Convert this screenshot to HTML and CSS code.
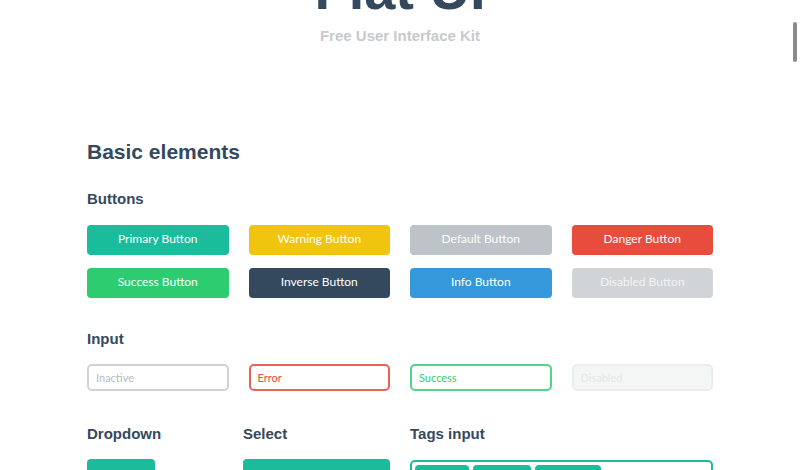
FILE: index.html
```html
<!DOCTYPE html>
<html lang="en">
<head>
<meta charset="utf-8">
<title>Flat UI</title>
<link rel="stylesheet" href="styles.css">
</head>
<body>
<div class="page">
  <header class="hero">
    <h1 class="hero-title">Flat UI</h1>
    <p class="hero-sub">Free User Interface Kit</p>
  </header>

  <main class="content">
    <h2 class="section-title">Basic elements</h2>

    <h3 class="block-title first">Buttons</h3>
    <div class="btn-grid">
      <button class="btn btn-primary">Primary Button</button>
      <button class="btn btn-warning">Warning Button</button>
      <button class="btn btn-default">Default Button</button>
      <button class="btn btn-danger">Danger Button</button>
      <button class="btn btn-success">Success Button</button>
      <button class="btn btn-inverse">Inverse Button</button>
      <button class="btn btn-info">Info Button</button>
      <button class="btn btn-disabled" disabled>Disabled Button</button>
    </div>

    <h3 class="block-title">Input</h3>
    <div class="input-grid">
      <input class="field" type="text" placeholder="Inactive">
      <input class="field field-error" type="text" value="Error">
      <input class="field field-success" type="text" value="Success">
      <input class="field field-disabled" type="text" placeholder="Disabled" disabled>
    </div>

    <div class="controls-grid">
      <div class="control">
        <h3 class="block-title inline">Dropdown</h3>
        <button class="dd-btn">Default</button>
      </div>
      <div class="control">
        <h3 class="block-title inline">Select</h3>
        <button class="dd-btn wide">My Profile</button>
      </div>
      <div class="control">
        <h3 class="block-title inline">Tags input</h3>
        <div class="tags">
          <span class="tag t1">Red</span>
          <span class="tag t2">Green</span>
          <span class="tag t3">Blue</span>
        </div>
      </div>
    </div>
  </main>
</div>
<div class="scrollbar"></div>
</body>
</html>
```

FILE: styles.css
```css
html {
  overflow: hidden;
  height: 100%;
}
body {
  margin: 0;
  background: #ffffff;
  font-family: "Liberation Sans", Arial, sans-serif;
  color: #34495e;
}
.page {
  width: 626px;
  margin: 0 auto;
}
.hero {
  text-align: center;
}
.hero-title {
  margin: -38px 0 0;
  font-size: 56px;
  line-height: 1;
  font-weight: 700;
  color: #34495e;
}
.hero-sub {
  margin: 10px 0 0;
  font-size: 15px;
  line-height: 1;
  font-weight: 700;
  color: #c6cacd;
}
.section-title {
  margin: 98px 0 0;
  font-size: 21px;
  line-height: 1;
  font-weight: 700;
}
.block-title {
  margin: 33px 0 0;
  font-size: 15px;
  line-height: 1;
  font-weight: 700;
}
.block-title.first {
  margin-top: 29px;
}
.block-title.inline {
  margin: 0;
}
.btn-grid {
  margin-top: 19px;
  display: grid;
  grid-template-columns: repeat(4, 1fr);
  column-gap: 20px;
  row-gap: 13px;
}
.btn {
  height: 30px;
  border: 0;
  border-radius: 4px;
  font-family: Lato, "Liberation Sans", sans-serif;
  font-size: 12px;
  color: #ffffff;
  padding: 0 0 3px;
}
.btn-primary { background: #1abc9c; }
.btn-warning { background: #f1c40f; }
.btn-default { background: #bdc3c7; }
.btn-danger { background: #e74c3c; }
.btn-success { background: #2ecc71; }
.btn-inverse { background: #34495e; }
.btn-info { background: #3498db; }
.btn-disabled {
  background: #bdc3c7;
  color: rgba(255, 255, 255, 0.75);
  opacity: 0.7;
}
.input-grid {
  margin-top: 18px;
  display: grid;
  grid-template-columns: repeat(4, 1fr);
  column-gap: 20px;
}
.field {
  box-sizing: border-box;
  width: 100%;
  height: 27px;
  border: 2px solid #cfd3d6;
  border-radius: 5px;
  padding: 0 7px 1px;
  font-family: Lato, "Liberation Sans", sans-serif;
  font-size: 11px;
  color: #34495e;
  background: #ffffff;
  outline: none;
}
.field::placeholder {
  color: #b2bcc5;
}
.field-error {
  border-color: #e8625a;
  color: #e74c3c;
}
.field-success {
  border-color: #4fd68a;
  color: #2ecc71;
}
.field-disabled {
  background: #f4f6f6;
  border-color: #e9eded;
}
.field-disabled::placeholder {
  color: #e2e6e6;
}
.controls-grid {
  margin-top: 35px;
  display: grid;
  grid-template-columns: 136px 147px 303px;
  column-gap: 20px;
}
.control {
  display: flex;
  flex-direction: column;
  align-items: flex-start;
  gap: 18px;
}
.dd-btn {
  width: 68px;
  height: 38px;
  border: 0;
  border-radius: 4px;
  background: #1abc9c;
  color: #ffffff;
  font-family: Lato, "Liberation Sans", sans-serif;
  font-size: 13px;
  font-weight: 700;
  text-align: left;
  padding: 6px 10px 0;
  line-height: 18px;
  display: block;
  box-sizing: border-box;
}
.dd-btn.wide {
  width: 147px;
}
.tags {
  box-sizing: border-box;
  width: 100%;
  height: 40px;
  margin-top: 1px;
  border: 2px solid #1abc9c;
  border-radius: 5px;
  padding: 3px 3px;
  display: flex;
  gap: 4px;
}
.tag {
  height: 26px;
  background: #1abc9c;
  border-radius: 4px;
  color: #ffffff;
  font-family: Lato, "Liberation Sans", sans-serif;
  font-size: 12px;
  line-height: 26px;
  padding-left: 10px;
  box-sizing: border-box;
}
.t1 { width: 54px; }
.t2 { width: 58px; }
.t3 { width: 66px; }
.scrollbar {
  position: absolute;
  top: 22px;
  right: 3px;
  width: 4px;
  height: 40px;
  border-radius: 2px;
  background: #8a8a8a;
}
```
